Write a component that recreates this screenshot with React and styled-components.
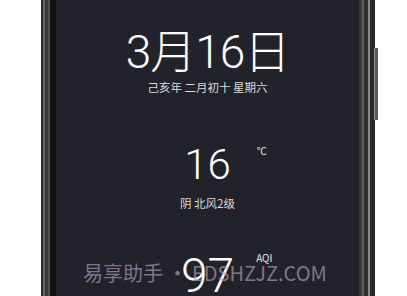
import React from "react"
import styled, { createGlobalStyle } from "styled-components"

const GlobalStyle = createGlobalStyle`
  html, body {
    margin: 0;
    padding: 0;
    background: #ffffff;
  }
  body {
    font-family: Roboto, "Noto Sans CJK SC", sans-serif;
  }
`

const Page = styled.div`
  height: 296px;
  overflow: hidden;
  display: flex;
  padding-left: 41px;
`

const Phone = styled.div`
  position: relative;
  width: 334px;
  display: flex;
  padding: 0 16px 0 15px;
  box-sizing: border-box;
  background: linear-gradient(
    to right,
    #2b2b2d 0px,
    #2b2b2d 2px,
    #66666a 2px,
    #66666a 4px,
    #38383a 4px,
    #38383a 7px,
    #555558 7px,
    #555558 9px,
    #111113 9px,
    #111113 318px,
    #3a3a3c 318px,
    #3a3a3c 321px,
    #5c5c5e 321px,
    #5c5c5e 323px,
    #303032 323px,
    #303032 327px,
    #8a8a8c 327px,
    #8a8a8c 329px,
    #2a2a2c 329px
  );
`

const SideButton = styled.div`
  position: absolute;
  right: -3px;
  top: ${(p) => p.top}px;
  width: 3px;
  height: ${(p) => p.length}px;
  background: #5a5a5c;
  border-left: 1px solid #9a9a9c;
`

const Screen = styled.div`
  position: relative;
  flex: 1;
  background: #22222b;
  display: flex;
  flex-direction: column;
  align-items: center;
  padding-top: 24px;
  color: #ffffff;
`

const DateTitle = styled.div`
  font-family: Roboto, "Noto Sans CJK SC", sans-serif;
  font-weight: 300;
  font-size: 46px;
  line-height: 56px;
  letter-spacing: -1px;
`

const Lunar = styled.div`
  font-family: "Noto Sans CJK SC", sans-serif;
  font-size: 11.5px;
  line-height: 14px;
  color: #dcdcdc;
`

const Reading = styled.div`
  position: relative;
  font-family: Roboto, sans-serif;
  font-weight: 300;
  font-size: ${(p) => p.size}px;
  line-height: ${(p) => p.size}px;
  margin-top: ${(p) => p.gap}px;
`

const Unit = styled.span`
  position: absolute;
  left: 100%;
  top: ${(p) => p.top}px;
  margin-left: ${(p) => p.offset}px;
  font-family: "Noto Sans CJK SC", sans-serif;
  font-weight: 400;
  font-size: ${(p) => p.size}px;
  line-height: 1;
  color: #e6e6e6;
  white-space: nowrap;
`

const Weather = styled.div`
  font-family: "Noto Sans CJK SC", sans-serif;
  font-size: 11.5px;
  line-height: 14px;
  color: #dcdcdc;
  margin-top: 10px;
`

const Watermark = styled.div`
  position: absolute;
  left: 27px;
  top: 261px;
  font-family: "Noto Sans CJK SC", sans-serif;
  font-size: 20px;
  line-height: 24px;
  color: rgba(170, 150, 175, 0.72);
  white-space: nowrap;
  pointer-events: none;
`

export default function App() {
  return (
    <>
      <GlobalStyle />
      <Page>
        <Phone>
          <Screen>
            <DateTitle>3月16日</DateTitle>
            <Lunar>己亥年 二月初十 星期六</Lunar>
            <Reading size={42} gap={50}>
              16
              <Unit size={10} top={2} offset={26}>℃</Unit>
            </Reading>
            <Weather>阴 北风2级</Weather>
            <Reading size={48} gap={42}>
              97
              <Unit size={10} top={1} offset={22}>AQI</Unit>
            </Reading>
            <Watermark>易享助手 • EDSHZJZ.COM</Watermark>
          </Screen>
          <SideButton top={48} length={72} />
        </Phone>
      </Page>
    </>
  )
}
